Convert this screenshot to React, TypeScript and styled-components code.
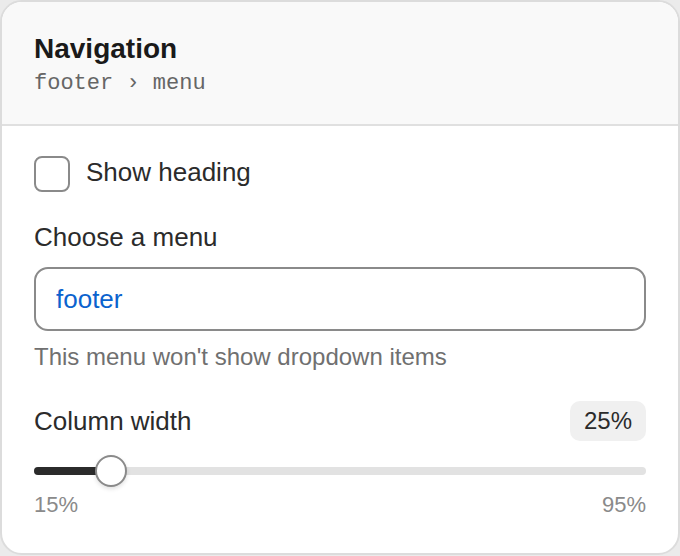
import React, { useState } from 'react';
import styled, { createGlobalStyle } from 'styled-components';

const GlobalStyle = createGlobalStyle`
  * { box-sizing: border-box; }
  html, body {
    margin: 0;
    padding: 0;
    background: #ebebeb;
    font-family: "Liberation Sans", Arial, sans-serif;
  }
`;

const MIN = 15;
const MAX = 95;

function App() {
  const [showHeading, setShowHeading] = useState(false);
  const [width, setWidth] = useState(25);
  const pct = ((width - MIN) / (MAX - MIN)) * 100;

  return (
    <>
      <GlobalStyle />
      <Card>
        <Header>
          <Title>Navigation</Title>
          <Path>footer › menu</Path>
        </Header>

        <Body>
          <CheckRow onClick={() => setShowHeading(!showHeading)}>
            <CheckBox $checked={showHeading} />
            <CheckLabel>Show heading</CheckLabel>
          </CheckRow>

          <Field>
            <Label>Choose a menu</Label>
            <MenuInput defaultValue="footer" />
            <Hint>This menu won't show dropdown items</Hint>
          </Field>

          <Field>
            <LabelRow>
              <Label>Column width</Label>
              <Badge>{width}%</Badge>
            </LabelRow>
            <Slider>
              <Track>
                <Fill style={{ width: `${pct}%` }} />
              </Track>
              <Thumb style={{ left: `${pct}%` }} />
              <RangeInput
                type="range"
                min={MIN}
                max={MAX}
                value={width}
                onChange={e => setWidth(Number(e.target.value))}
              />
            </Slider>
            <Ticks>
              <span>{MIN}%</span>
              <span>{MAX}%</span>
            </Ticks>
          </Field>
        </Body>
      </Card>
    </>
  );
}

export default App;

const Card = styled.div`
  width: 680px;
  height: 555px;
  background: #fff;
  border: 2px solid #dcdcdc;
  border-radius: 22px;
  overflow: hidden;
  display: flex;
  flex-direction: column;
`;

const Header = styled.div`
  background: #f9f9f9;
  border-bottom: 2px solid #e0e0e0;
  padding: 29px 32px 26px;
`;

const Title = styled.div`
  font-size: 28px;
  line-height: 35px;
  font-weight: 700;
  color: #1a1a1a;
`;

const Path = styled.div`
  margin-top: 4px;
  font-family: "Liberation Mono", "DejaVu Sans Mono", monospace;
  font-size: 22px;
  line-height: 28px;
  color: #666;
`;

const Body = styled.div`
  padding: 30px 32px 0;
  display: flex;
  flex-direction: column;
`;

const CheckRow = styled.label`
  display: flex;
  align-items: center;
  gap: 16px;
  cursor: pointer;
`;

const CheckBox = styled.span<{ $checked: boolean }>`
  width: 36px;
  height: 36px;
  border: 2px solid #8a8a8a;
  border-radius: 8px;
  background: ${p => (p.$checked ? '#2b2b2b' : '#fff')};
  flex-shrink: 0;
`;

const CheckLabel = styled.span`
  font-size: 26px;
  line-height: 31px;
  color: #2b2b2b;
  margin-top: -3px;
`;

const Field = styled.div`
  display: flex;
  flex-direction: column;
  margin-top: 30px;

  & + & {
    margin-top: 30px;
  }
`;

const Label = styled.div`
  font-size: 26px;
  line-height: 31px;
  color: #2b2b2b;
`;

const MenuInput = styled.input`
  all: unset;
  box-sizing: border-box;
  margin-top: 14px;
  width: 100%;
  height: 64px;
  border: 2px solid #8a8a8a;
  border-radius: 14px;
  padding: 0 20px;
  font-family: "Liberation Sans", Arial, sans-serif;
  font-size: 26px;
  color: #0b63ce;
`;

const Hint = styled.div`
  margin-top: 11px;
  font-size: 24px;
  line-height: 29px;
  color: #707070;
`;

const LabelRow = styled.div`
  display: flex;
  align-items: center;
  justify-content: space-between;
  height: 40px;
`;

const Badge = styled.span`
  height: 40px;
  padding: 0 14px;
  display: flex;
  align-items: center;
  background: #f0f0f0;
  border-radius: 10px;
  font-size: 24px;
  color: #2b2b2b;
`;

const Slider = styled.div`
  position: relative;
  height: 32px;
  margin-top: 14px;
  display: flex;
  align-items: center;
`;

const Track = styled.div`
  width: 100%;
  height: 8px;
  border-radius: 4px;
  background: #e2e2e2;
  overflow: hidden;
`;

const Fill = styled.div`
  height: 100%;
  background: #2b2b2b;
`;

const Thumb = styled.div`
  position: absolute;
  top: 0;
  width: 32px;
  height: 32px;
  margin-left: -16px;
  border-radius: 50%;
  background: #fff;
  border: 2px solid #8a8a8a;
  box-shadow: 0 2px 4px rgba(0, 0, 0, 0.12);
  pointer-events: none;
`;

const RangeInput = styled.input`
  position: absolute;
  inset: 0;
  width: 100%;
  margin: 0;
  opacity: 0;
  cursor: pointer;
`;

const Ticks = styled.div`
  display: flex;
  justify-content: space-between;
  margin-top: 5px;
  font-size: 22px;
  line-height: 26px;
  color: #8a8a8a;
`;
